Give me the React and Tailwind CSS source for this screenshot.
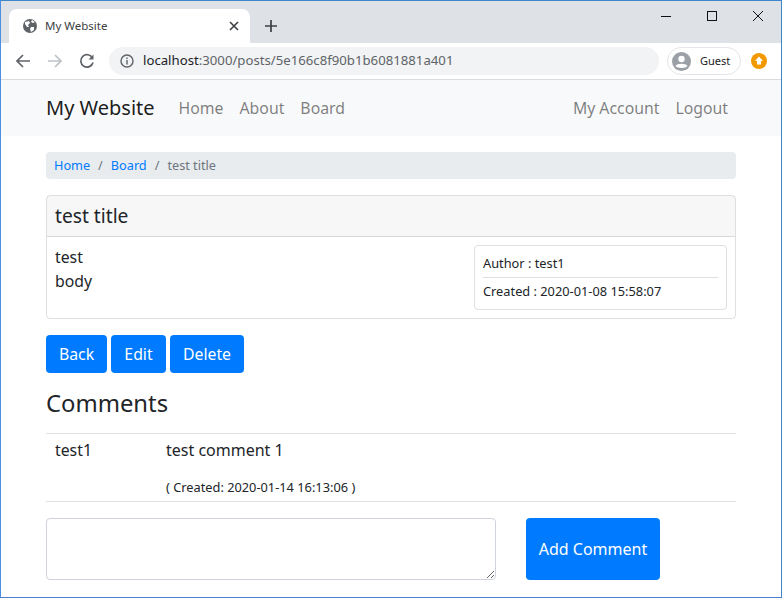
import React from "react";

const font = { fontFamily: '"Noto Sans", "Open Sans", sans-serif' };

function Globe() {
  return (
    <svg width="16" height="16" viewBox="0 0 16 16" className="shrink-0">
      <circle cx="8" cy="8" r="7" fill="#5f6368" />
      <path d="M3 4 L7 3 L8 5 L6 7 L7 9 L5 9 L3 6 Z M9 9 L12 9 L12 12 L9 14 L8 11 Z M10 2 L13 4 L11 5 L9 4 Z" fill="#fff" />
    </svg>
  );
}

export default function App() {
  return (
    <div style={font} className="w-[782px] h-[598px] overflow-hidden border border-[#3a86c8] border-b-[#4a7fd0] border-l-[#4a8fe0] flex flex-col bg-white text-[#212529] text-[15.8px]">
      {/* Tab strip */}
      <div className="h-[42px] bg-[#dee1e6] flex shrink-0 relative">
        <div className="ml-[8px] mt-[8px] w-[241px] h-[34px] bg-white rounded-t-[8px] flex items-center pl-[13px] pr-[11px]">
          <Globe />
          <span className="ml-[7px] text-[11.5px] text-[#3c4043] flex-1">My Website</span>
          <svg width="10" height="10" viewBox="0 0 10 10"><path d="M1 1 L9 9 M9 1 L1 9" stroke="#3c4043" strokeWidth="1.6" /></svg>
        </div>
        <svg width="14" height="14" viewBox="0 0 14 14" className="ml-[14px] mt-[18px]"><path d="M7 1 V13 M1 7 H13" stroke="#3c4043" strokeWidth="1.7" /></svg>
        <div className="absolute right-[0px] top-0 flex items-center h-[30px] text-black">
          <div className="w-[46px] flex justify-center"><svg width="10" height="10" viewBox="0 0 10 10"><path d="M0 5.5 H10" stroke="#111" strokeWidth="1" /></svg></div>
          <div className="w-[46px] flex justify-center"><svg width="10" height="10" viewBox="0 0 10 10"><rect x="0.5" y="0.5" width="9" height="9" fill="none" stroke="#111" strokeWidth="1" /></svg></div>
          <div className="w-[46px] flex justify-center"><svg width="10" height="10" viewBox="0 0 10 10"><path d="M0 0 L10 10 M10 0 L0 10" stroke="#111" strokeWidth="1" /></svg></div>
        </div>
      </div>

      {/* Toolbar */}
      <div className="h-[37px] bg-white flex items-center shrink-0 border-b border-[#dadce0]">
        <svg width="16" height="16" viewBox="0 0 16 16" className="ml-[14px]"><path d="M15 8 H2 M8 2 L2 8 L8 14" fill="none" stroke="#5f6368" strokeWidth="1.7" /></svg>
        <svg width="16" height="16" viewBox="0 0 16 16" className="ml-[16px]"><path d="M1 8 H14 M8 2 L14 8 L8 14" fill="none" stroke="#bdc1c6" strokeWidth="1.7" /></svg>
        <svg width="16" height="16" viewBox="0 0 16 16" className="ml-[16px]"><path d="M13.5 5 A6.2 6.2 0 1 0 14 9.5" fill="none" stroke="#5f6368" strokeWidth="1.7" /><path d="M14.5 1.5 V6.5 H9.5 Z" fill="#5f6368" /></svg>
        <div className="ml-[14px] w-[550px] h-[28px] rounded-full bg-[#f1f3f4] flex items-center pl-[11px]">
          <svg width="14" height="14" viewBox="0 0 14 14"><circle cx="7" cy="7" r="6" fill="none" stroke="#5f6368" strokeWidth="1.4" /><path d="M7 6 V10.5 M7 3.4 V4.9" stroke="#5f6368" strokeWidth="1.4" /></svg>
          <span className="ml-[9px] text-[13.2px] text-[#5f6368]"><span className="text-[#202124]">localhost</span>:3000/posts/5e166c8f90b1b6081881a401</span>
        </div>
        <div className="ml-[8px] w-[74px] h-[28px] rounded-full border border-[#e3e5e8] flex items-center pl-[4px]">
          <svg width="19" height="19" viewBox="0 0 19 19"><circle cx="9.5" cy="9.5" r="9.5" fill="#9aa0a6" /><circle cx="9.5" cy="7" r="3.2" fill="#fff" /><path d="M3.5 14 C5 11 14 11 15.5 14 C14 16.5 5 16.5 3.5 14 Z" fill="#fff" /></svg>
          <span className="ml-[9px] text-[11px] text-[#202124]">Guest</span>
        </div>
        <svg width="16" height="16" viewBox="0 0 16 16" className="ml-[10px]"><circle cx="8" cy="8" r="8" fill="#f29900" /><path d="M8 3.5 L12 8 H10 V11.5 H6 V8 H4 Z" fill="#fff" /></svg>
      </div>

      {/* Navbar */}
      <nav className="h-[56px] bg-[#f8f9fa] flex items-center pl-[45px] pr-[53px] shrink-0">
        <span className="text-[20px] text-[#000000e6]">My Website</span>
        <div className="ml-[24px] pt-[1px] flex gap-[16px] text-[#00000080]">
          <span>Home</span><span>About</span><span>Board</span>
        </div>
        <div className="ml-auto pt-[1px] flex gap-[16px] text-[#00000080]">
          <span>My Account</span><span>Logout</span>
        </div>
      </nav>

      {/* Content */}
      <main className="pl-[45px] pr-[45px] pt-[16px] flex flex-col">
        <div className="h-[27px] pt-[1px] bg-[#e9ecef] rounded-[4px] flex items-center px-[8px] text-[12.7px] text-[#6c757d]">
          <span className="text-[#007bff]">Home</span>
          <span className="mx-[8px]">/</span>
          <span className="text-[#007bff]">Board</span>
          <span className="mx-[8px]">/</span>
          <span>test title</span>
        </div>

        <div className="mt-[16px] h-[124px] border border-[#00000020] rounded-[4px] flex flex-col">
          <div className="h-[41px] bg-[#00000008] border-b border-[#00000020] flex items-center px-[8px] text-[19.2px]">test title</div>
          <div className="flex-1 flex justify-between pl-[8px] pr-[8px] pt-[8px]">
            <div className="leading-[24px]">test<br />body</div>
            <div className="w-[253px] h-[65px] border border-[#00000020] rounded-[4px] px-[8px] text-[12.8px] flex flex-col">
              <div className="h-[32px] pt-[4px] flex items-center border-b border-[#00000020]">Author : test1</div>
              <div className="flex-1 pb-[4px] flex items-center">Created : 2020-01-08 15:58:07</div>
            </div>
          </div>
        </div>

        <div className="mt-[16px] flex gap-[4px] text-white">
          <div className="h-[38px] pt-[1px] w-[61px] bg-[#007bff] rounded-[4px] flex items-center justify-center">Back</div>
          <div className="h-[38px] pt-[1px] w-[55px] bg-[#007bff] rounded-[4px] flex items-center justify-center">Edit</div>
          <div className="h-[38px] pt-[1px] w-[74px] bg-[#007bff] rounded-[4px] flex items-center justify-center">Delete</div>
        </div>

        <h4 className="mt-[14px] h-[36px] text-[23.8px] leading-[32px]">Comments</h4>

        <div className="mt-[10px] h-[69px] border-t border-b border-[#dee2e6] flex pl-[9px]">
          <div className="w-[111px] pt-[5px]">test1</div>
          <div className="flex flex-col">
            <div className="pt-[4px] text-[16px]">test comment 1</div>
            <div className="mt-[16px] text-[12.8px]">( Created: 2020-01-14 16:13:06 )</div>
          </div>
        </div>

        <div className="mt-[16px] flex">
          <textarea className="w-[450px] h-[62px] border border-[#ced4da] rounded-[4px] bg-white" />
          <div className="ml-[30px] h-[62px] w-[134px] bg-[#007bff] rounded-[4px] text-white text-[16px] flex items-center justify-center">Add Comment</div>
        </div>
      </main>
    </div>
  );
}
